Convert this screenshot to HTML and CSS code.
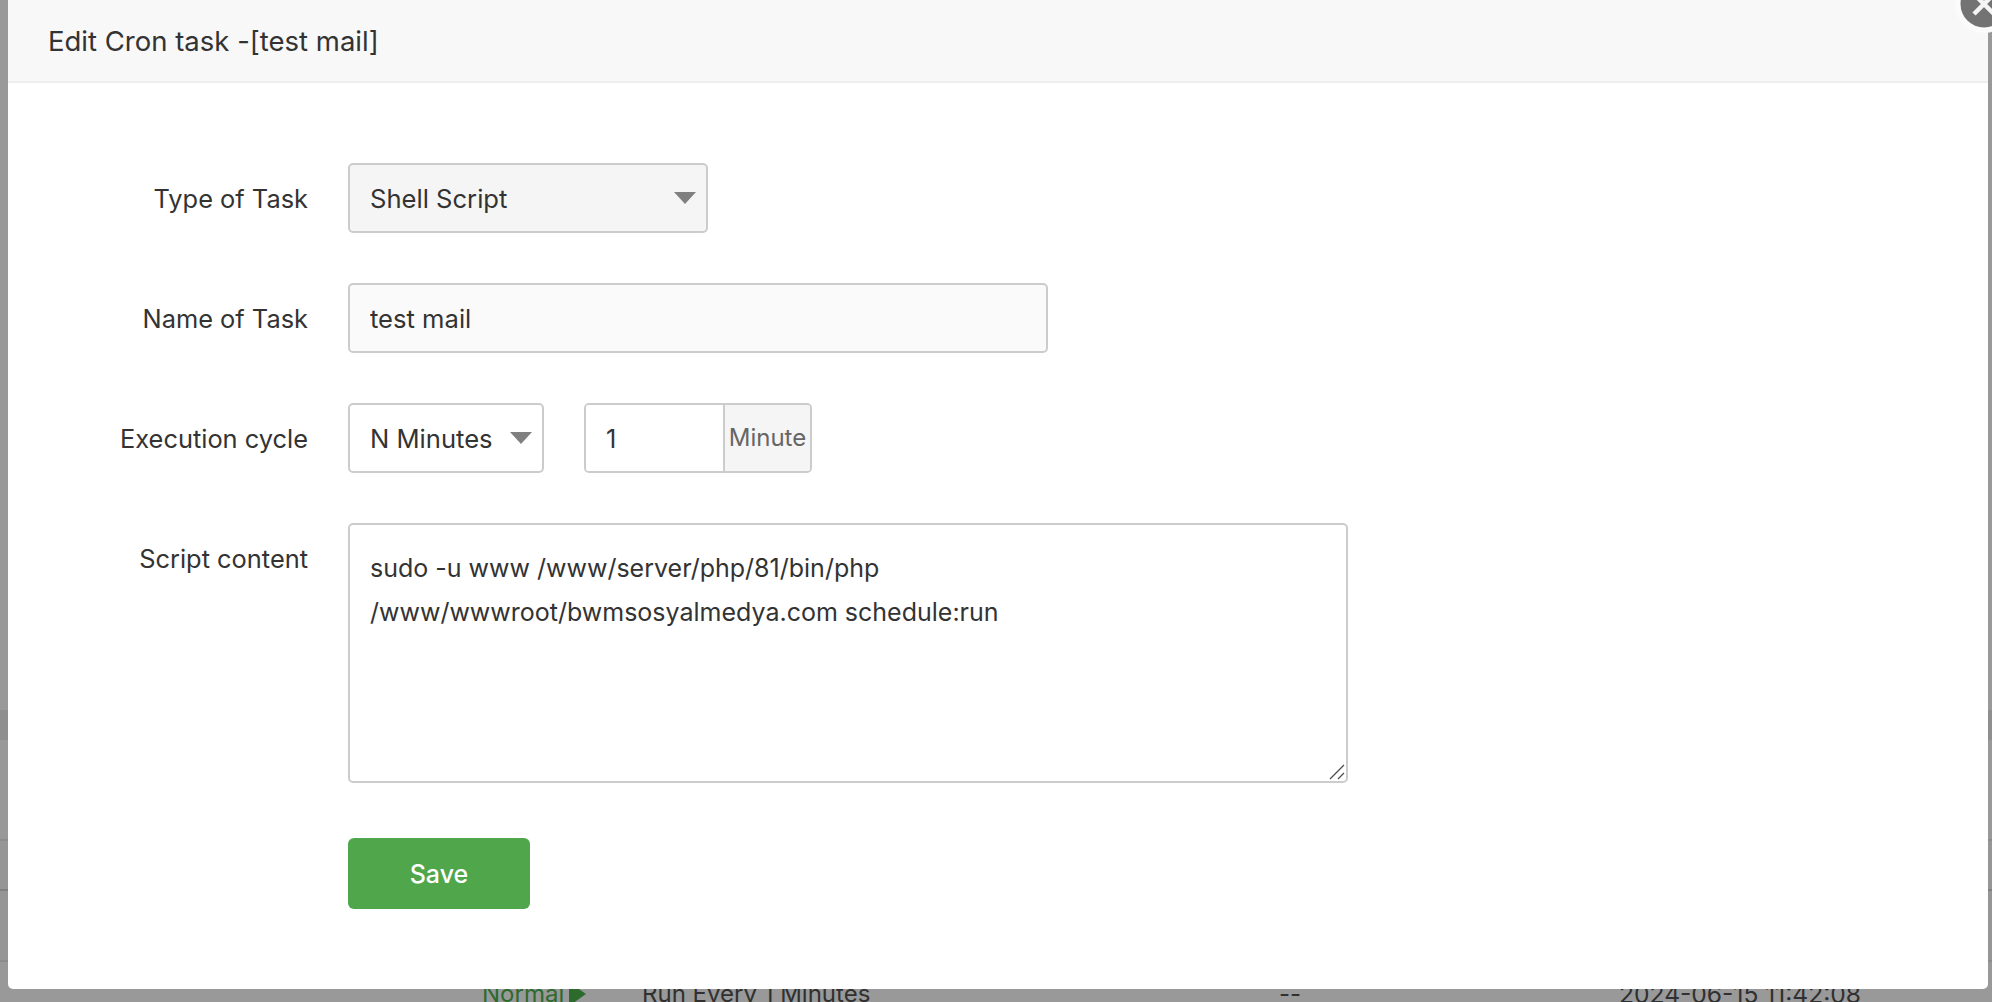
FILE: index.html
```html
<!DOCTYPE html>
<html lang="en">
<head>
<meta charset="utf-8">
<title>Edit Cron task</title>
<link rel="stylesheet" href="styles.css">
</head>
<body>
<div class="backdrop">
  <div class="band"></div>
  <div class="row row-a"></div>
  <div class="row row-b"></div>
  <div class="row row-c"></div>
  <div class="row-text">
    <span class="status">Normal<svg class="play" viewBox="0 0 17 24" width="17" height="24"><path d="M0 0L17 12L0 24Z"/></svg></span>
    <span class="cycle">Run Every 1 Minutes</span>
    <span class="dash">--</span>
    <span class="time">2024-06-15 11:42:08</span>
  </div>
</div>
<section class="modal">
  <header class="modal-head">Edit Cron task -[test mail]</header>
  <form class="modal-body">
    <div class="field">
      <label class="field-label">Type of Task</label>
      <span class="select-wrap select-type">
        <select class="control control-grey"><option>Shell Script</option></select>
      </span>
    </div>
    <div class="field">
      <label class="field-label">Name of Task</label>
      <input class="control control-name" type="text" value="test mail" readonly>
    </div>
    <div class="field">
      <label class="field-label">Execution cycle</label>
      <span class="select-wrap select-cycle">
        <select class="control control-white"><option>N Minutes</option></select>
      </span>
      <span class="input-group">
        <input class="group-input" type="text" value="1" readonly>
        <span class="group-addon">Minute</span>
      </span>
    </div>
    <div class="field field-script">
      <label class="field-label">Script content</label>
      <span class="script-wrap">
        <textarea class="script" readonly>sudo -u www /www/server/php/81/bin/php /www/wwwroot/bwmsosyalmedya.com schedule:run</textarea>
        <svg class="grip" viewBox="0 0 16 16" width="16" height="16"><path d="M1 15L15 1M9 15L15 9" stroke="#4d4d4d" stroke-width="1.3" fill="none"/></svg>
      </span>
    </div>
    <div class="actions">
      <button class="save" type="button">Save</button>
    </div>
  </form>
  <svg class="close" viewBox="0 0 58 58" width="58" height="58" aria-label="Close">
    <circle cx="29" cy="29" r="29" fill="#fbfbfb"/>
    <circle cx="29" cy="29" r="23.5" fill="#737373"/>
    <path d="M19 19L39 39M39 19L19 39" stroke="#f4f4f4" stroke-width="4.5" fill="none"/>
  </svg>
</section>
</body>
</html>
```
FILE: styles.css
```css
* { box-sizing: border-box; }
html, body { margin: 0; height: 100%; overflow: hidden; }
body {
  font-family: Inter, "Liberation Sans", sans-serif;
  color: #333;
  background: #999;
}
.backdrop {
  height: 1002px;
  overflow: hidden;
  padding-top: 710px;
  background: #999;
}
.band { height: 30px; background: #8f8f8f; }
.row { border-bottom: 2px solid #8c8c8c; }
.row-a { height: 101px; }
.row-b { height: 50px; border-bottom-color: #818181; background: #969696; }
.row-c { height: 71px; background: #969696; }
.row-text {
  height: 47px;
  display: flex;
  align-items: flex-end;
  font-size: 24px;
  line-height: 30px;
  color: #333;
  background: #999;
}
.status { margin-left: 482px; width: 160px; color: #2c6b2c; display: flex; align-items: center; }
.play { margin-left: 5px; fill: #2c6b2c; flex: none; }
.cycle { width: 637px; color: #303030; }
.dash { width: 340px; color: #303030; }
.time { color: #303030; font-size: 24.6px; }
.modal {
  position: absolute;
  left: 8px;
  top: 0;
  width: 1980px;
  height: 989px;
  background: #fff;
  border-radius: 0 0 5px 5px;
}
.modal-head {
  height: 83px;
  padding: 0 40px;
  line-height: 83px;
  font-size: 27.5px;
  background: #f8f8f8;
  border-bottom: 2px solid #eee;
}
.modal-body { padding-top: 80px; }
.field { display: flex; margin-bottom: 50px; }
.field-label {
  width: 300px;
  height: 70px;
  margin-right: 40px;
  text-align: right;
  font-size: 25.4px;
  line-height: 71px;
}
.select-wrap { position: relative; display: block; height: 70px; }
.select-wrap::after {
  content: "";
  position: absolute;
  right: 12.5px;
  top: 29px;
  border-style: solid;
  border-width: 12px 11px 0;
  border-color: #808080 transparent transparent;
}
.select-type { width: 360px; }
.select-cycle { width: 196px; margin-right: 40px; }
.control {
  display: block;
  width: 100%;
  height: 70px;
  padding: 0 20px;
  border: 2.5px solid #ccc;
  border-radius: 5px;
  font: 25.6px Inter, "Liberation Sans", sans-serif;
  color: #333;
  appearance: none;
  outline: none;
}
.control-grey { background: #f5f5f5; }
.control-white { background: #fff; }
.control-name { width: 700px; background: #fafafa; }
.input-group { display: flex; width: 228px; height: 70px; border: 2.5px solid #ccc; border-radius: 5px; overflow: hidden; }
.group-input {
  width: 137px;
  padding: 0 20px;
  border: 0;
  font: 25.4px Inter, "Liberation Sans", sans-serif;
  color: #333;
  outline: none;
  background: #fff;
}
.group-addon {
  flex: 1;
  border-left: 2.5px solid #ccc;
  background: #f5f5f5;
  color: #666;
  font-size: 24px;
  line-height: 66px;
  text-align: center;
}
.field-script { margin-bottom: 55px; }
.script-wrap { position: relative; display: block; }
.script {
  display: block;
  width: 1000px;
  height: 260px;
  padding: 21px 20px 20px;
  border: 2.5px solid #ccc;
  border-radius: 5px;
  font: 25px/44px Inter, "Liberation Sans", sans-serif;
  color: #333;
  background: #fff;
  outline: none;
  resize: none;
}
.grip { position: absolute; right: 3px; bottom: 3px; }
.actions { padding-left: 340px; }
.save {
  display: block;
  width: 182px;
  height: 71px;
  border: 0;
  border-radius: 6px;
  background: #4fa64b;
  color: #fff;
  font: 500 25px Inter, "Liberation Sans", sans-serif;
}
.close { position: absolute; right: -25px; top: -25px; }
```
